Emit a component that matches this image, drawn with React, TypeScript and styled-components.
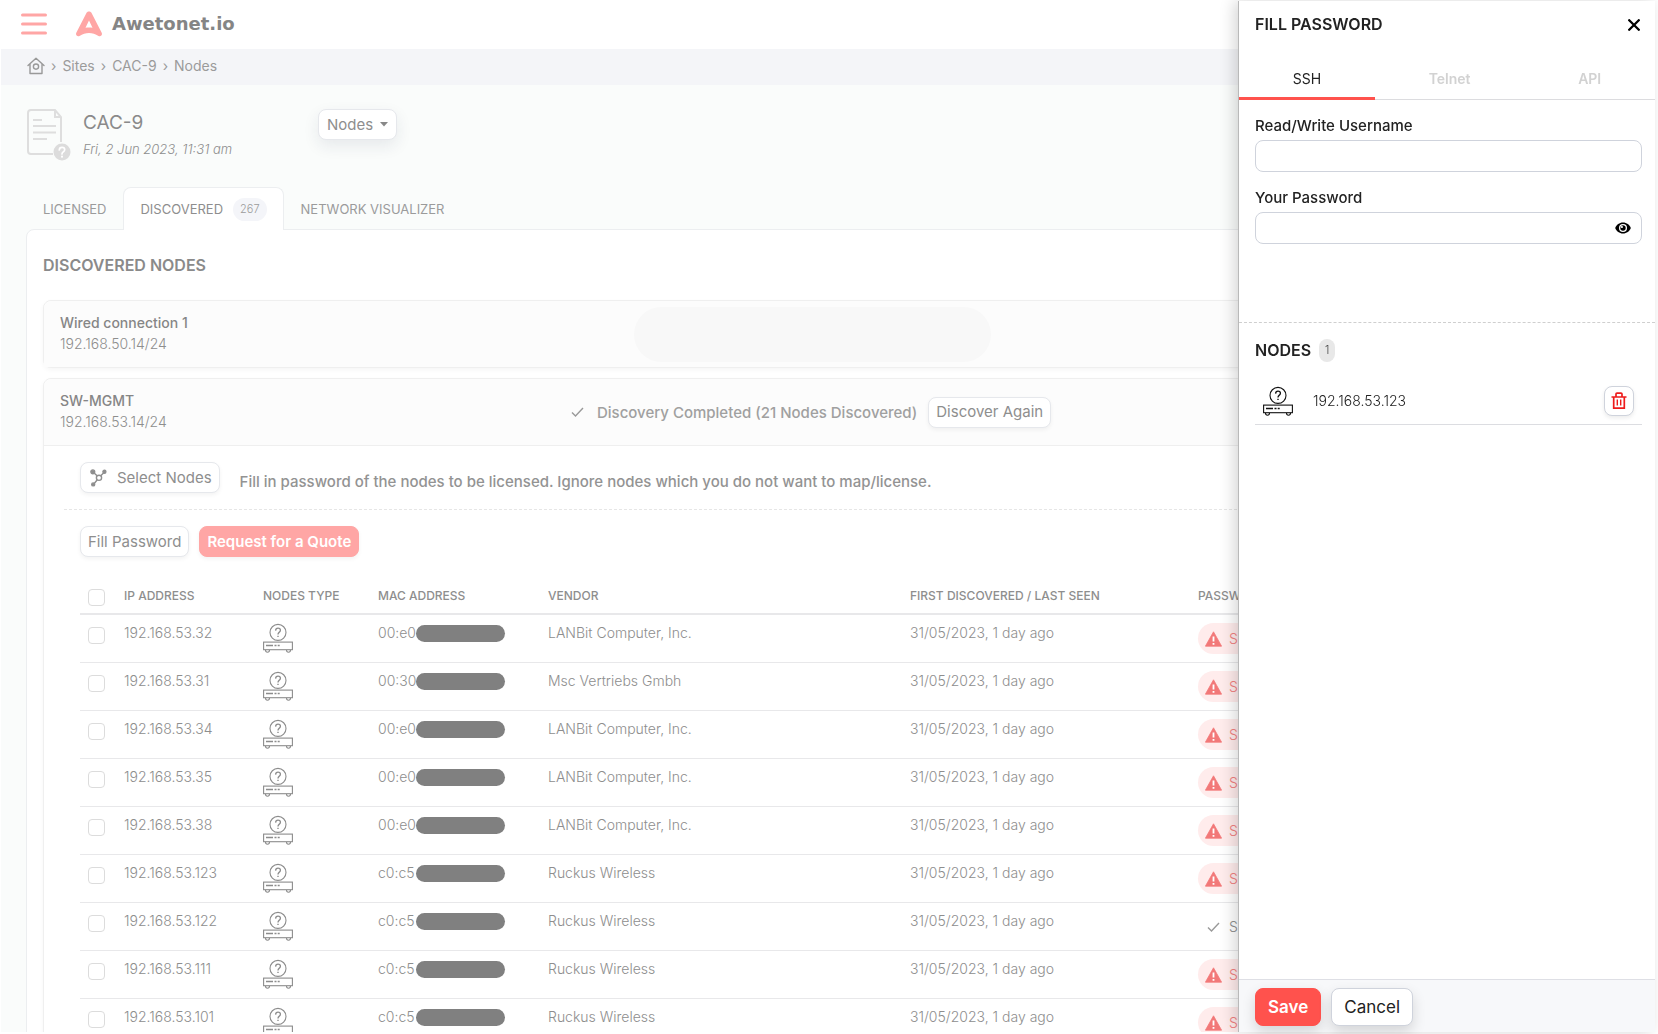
import React from "react";
import styled, { createGlobalStyle, css } from "styled-components";

const color = {
  accent: "#ff524d",
  accentSoft: "#ffa6a5",
  ink: "#222222",
  text: "#8e8e8e",
  light: "#9b9b9b",
  line: "#e8e8ea",
  field: "#cfd3dc",
};

const GlobalStyle = createGlobalStyle`
  * { box-sizing: border-box; }
  body {
    margin: 0;
    background: #fff;
    overflow: hidden;
    font-family: Inter, "Open Sans", sans-serif;
    font-size: 14px;
    line-height: 20px;
    color: ${color.text};
  }
  button, input, select { font: inherit; color: inherit; }
  button { cursor: pointer; }
  h1, h2, h3, p { margin: 0; }
`;

const Shell = styled.div`
  height: 100vh;
  padding: 1px 3px 2px 1px;
`;

const Page = styled.div`
  height: 100%;
  overflow: hidden;
  background: #fafcfb;
`;

const TopBar = styled.header`
  display: flex;
  align-items: center;
  height: 48px;
  padding: 0 20px 2px;
  gap: 29px;
  background: #fff;
`;

const IconButton = styled.button`
  display: flex;
  align-items: center;
  justify-content: center;
  padding: 0;
  border: 0;
  background: none;
`;

const Brand = styled.a`
  display: flex;
  align-items: center;
  gap: 10px;
  color: #858585;
  text-decoration: none;
  font-family: "DejaVu Sans", sans-serif;
  font-size: 18px;
  font-weight: 700;
`;

const Breadcrumb = styled.nav`
  display: flex;
  align-items: center;
  gap: 6px;
  height: 36px;
  padding: 0 26px 2px;
  background: #f4f5f8;
  color: ${color.light};

  a {
    display: flex;
    color: inherit;
    text-decoration: none;
  }
`;

const Content = styled.main`
  padding: 24px 25px 0;
`;

const SiteHead = styled.div`
  display: flex;
  align-items: flex-start;
  height: 78px;
  padding-left: 1px;
`;

const SiteInfo = styled.div`
  width: 246px;
  padding: 2px 0 0 11px;
`;

const SiteName = styled.h1`
  font-size: 19px;
  line-height: 24px;
  font-weight: 400;
  color: #8a8a8a;
`;

const SiteDate = styled.p`
  padding-top: 4px;
  font-size: 13px;
  line-height: 20px;
  font-weight: 300;
  font-style: italic;
`;

const buttonBox = css`
  display: inline-flex;
  align-items: center;
  height: 31px;
  border: 1px solid #e6e8ec;
  border-radius: 8px;
  background: #fff;
  font-size: 15px;
  white-space: nowrap;
`;

const NodeMenu = styled.label`
  ${buttonBox}
  padding: 0 8px;
  gap: 7px;
  box-shadow: 0 6px 16px rgba(30, 40, 80, 0.09);

  select {
    appearance: none;
    field-sizing: content;
    border: 0;
    padding: 0;
    background: none;
    outline: none;
  }
`;

const TabStrip = styled.div`
  display: flex;
  align-items: flex-end;
  height: 42px;
`;

const PageTab = styled.button<{ $active?: boolean }>`
  display: flex;
  align-items: center;
  gap: 10px;
  height: 42px;
  padding: 0 16px;
  border: 1px solid transparent;
  border-bottom: 0;
  border-radius: 8px 8px 0 0;
  background: none;
  color: ${color.light};
  font-size: 13px;

  ${(p) =>
    p.$active &&
    css`
      position: relative;
      height: 43px;
      margin-bottom: -1px;
      border-color: #eceef0;
      background: #fff;
      color: ${color.text};
    `}
`;

const Count = styled.span<{ $dark?: boolean }>`
  padding: 0 ${(p) => (p.$dark ? 6 : 7)}px;
  border-radius: 12px;
  background: ${(p) => (p.$dark ? "#e8e8e8" : "#f4f5f9")};
  color: ${(p) => (p.$dark ? "#444" : color.light)};
  font-size: 11px;
  font-weight: 300;
  line-height: 23px;
`;

const Panel = styled.section`
  padding: 23px 16px 0;
  border: 1px solid #eceef0;
  border-radius: 8px 8px 0 0;
  background: #fff;
`;

const PanelTitle = styled.h2`
  height: 47px;
  font-size: 16px;
  line-height: 24px;
  font-weight: 600;
  color: #8a8a8a;
`;

const Card = styled.article`
  margin-bottom: 10px;
  border: 1px solid #efefef;
  border-radius: 8px;
  background: #fff;
  box-shadow: 0 2px 5px rgba(0, 0, 0, 0.04);
`;

const CardHead = styled.div<{ $open?: boolean }>`
  display: grid;
  grid-template-columns: 509px auto 1fr;
  align-items: center;
  height: ${(p) => (p.$open ? 67 : 66)}px;
  padding-left: 16px;
  border-bottom: ${(p) => (p.$open ? "1px solid #efefef" : "0")};
  border-radius: 8px 8px 0 0;
  background: #fcfcfc;
`;

const NetName = styled.h3`
  font-size: 14px;
  line-height: 21px;
  font-weight: 500;
  color: #868686;
`;

const NetAddress = styled.p`
  padding-bottom: 2px;
  line-height: 21px;
  font-weight: 300;
`;

const Placeholder = styled.div`
  width: 357px;
  height: 55px;
  margin-left: 65px;
  border-radius: 28px;
  background: #f8f8f8;
`;

const Status = styled.div`
  display: flex;
  align-items: center;
  gap: 11px;
  font-size: 15px;
  font-weight: 500;
  color: #a0a0a0;

  p {
    padding-top: 2px;
  }
`;

const SmallButton = styled.button<{ $primary?: boolean }>`
  ${buttonBox}
  gap: 10px;
  padding: 0 7px;
  color: ${color.text};
  font-weight: 400;
  box-shadow: 0 2px 4px rgba(0, 0, 0, 0.05);

  ${(p) =>
    p.$primary &&
    css`
      border-color: ${color.accentSoft};
      background: ${color.accentSoft};
      color: #fff;
      font-weight: 600;
    `}
`;

const CardBody = styled.div`
  padding: 16px 20px 0;
`;

const HintRow = styled.div`
  display: flex;
  gap: 20px;
  height: 48px;
  padding-left: 16px;
  border-bottom: 1px dashed #e6e6e6;

  p {
    padding-top: 10px;
    font-size: 15px;
    font-weight: 500;
    color: #939393;
  }
`;

const Actions = styled.div`
  display: flex;
  gap: 10px;
  padding: 16px 16px 22px;
`;

const NodeTable = styled.table`
  width: calc(100% - 32px);
  margin-left: 16px;
  table-layout: fixed;
  border-collapse: separate;
  border-spacing: 0;
  text-align: left;

  th {
    height: 36px;
    padding: 0;
    border-bottom: 2px solid ${color.line};
    font-size: 12px;
    font-weight: 500;
  }
  td {
    height: 48px;
    padding: 8px 0 0;
    vertical-align: top;
    border-bottom: 1px solid ${color.line};
    font-weight: 300;
    white-space: nowrap;
  }
`;

const Tick = styled.input`
  appearance: none;
  display: block;
  width: 17px;
  height: 17px;
  margin: 4px 0 0 8px;
  border: 1px solid #dcdcdc;
  border-radius: 4px;
  background: #fff;

  th & {
    margin-top: 2px;
  }
`;

const Mac = styled.span`
  display: flex;
  align-items: center;
  width: 127px;
`;

const MacPrefix = styled.span`
  width: 38px;
`;

const Redacted = styled.span`
  width: 89px;
  height: 17px;
  border-radius: 9px;
  background: #808080;
`;

const PassState = styled.span<{ $ok?: boolean }>`
  display: inline-flex;
  align-items: center;
  vertical-align: top;
  gap: 7px;
  height: 31px;
  padding: 0 12px 0 7px;
  border-radius: 16px;
  background: ${(p) => (p.$ok ? "transparent" : "#ffecec")};
  color: ${(p) => (p.$ok ? color.text : "#f28080")};
`;

const Drawer = styled.aside`
  position: fixed;
  top: 1px;
  right: 3px;
  bottom: 2px;
  display: flex;
  flex-direction: column;
  width: 417px;
  border-left: 1px solid #b9b9b9;
  background: #fff;
  box-shadow: -4px 0 14px rgba(0, 0, 0, 0.16);
  color: ${color.ink};
`;

const DrawerHead = styled.div`
  display: flex;
  justify-content: space-between;
  height: 48px;
  padding: 11px 15px 12px 16px;
`;

const DrawerTitle = styled.h2`
  font-size: 16px;
  line-height: 24px;
  font-weight: 600;
`;

const DrawerTabs = styled.div`
  display: flex;
  height: 51px;
  border-bottom: 1px solid #dcdcdf;
`;

const DrawerTab = styled.button<{ $active?: boolean }>`
  flex: 1 1 auto;
  height: 51px;
  padding: 11px 0 0;
  border: 0;
  border-bottom: 3px solid ${(p) => (p.$active ? color.accent : "transparent")};
  background: none;
  color: ${(p) => (p.$active ? color.ink : "#d2d2d2")};
  font-weight: ${(p) => (p.$active ? 400 : 600)};
`;

const Form = styled.form`
  display: flex;
  flex-direction: column;
  gap: 16px;
  height: 223px;
  padding: 16px 13px 0 16px;
  border-bottom: 1px dashed #cfcfcf;
`;

const Field = styled.div`
  display: flex;
  flex-direction: column;
  gap: 4px;

  label {
    font-size: 15px;
    font-weight: 500;
  }
`;

const FieldBox = styled.div`
  display: flex;
  align-items: center;
  height: 32px;
  padding: 0 10px;
  border: 1px solid ${color.field};
  border-radius: 8px;

  input {
    flex: 1;
    min-width: 0;
    border: 0;
    padding: 0;
    outline: none;
    background: none;
  }
`;

const NodeSection = styled.section`
  flex: 1;
  padding: 15px 13px 0 16px;
`;

const NodeHeading = styled.div`
  display: flex;
  align-items: center;
  gap: 8px;
  height: 24px;
`;

const NodeRow = styled.div`
  display: flex;
  align-items: center;
  height: 63px;
  padding: 15px 8px 0;
  border-bottom: 1px solid #dcdde1;

  span {
    flex: 1;
    padding-left: 20px;
    font-weight: 300;
  }
`;

const DeleteButton = styled(IconButton)`
  width: 30px;
  height: 30px;
  border: 1px solid ${color.field};
  border-radius: 8px;
  background: #fff;
  box-shadow: 0 2px 4px rgba(0, 0, 0, 0.08);
`;

const DrawerFoot = styled.footer`
  display: flex;
  gap: 10px;
  height: 53px;
  padding: 8px 16px 0;
  border-top: 1px solid #dedfe5;
  background: #f7f8fa;
`;

const LargeButton = styled.button<{ $primary?: boolean }>`
  height: 38px;
  padding: 0 12px;
  border: 1px solid ${(p) => (p.$primary ? color.accent : color.field)};
  border-radius: 8px;
  background: ${(p) => (p.$primary ? color.accent : "#fff")};
  color: ${(p) => (p.$primary ? "#fff" : color.ink)};
  font-size: 17px;
  font-weight: ${(p) => (p.$primary ? 600 : 400)};
  box-shadow: 0 6px 14px rgba(0, 0, 0, 0.14);
`;

const Hamburger = () => (
  <svg width="26" height="22" viewBox="0 0 26 22" stroke={color.accentSoft} strokeWidth="3" strokeLinecap="round">
    <path d="M1.5 2H24.5M1.5 11H24.5M1.5 20H24.5" />
  </svg>
);

const Logo = () => (
  <svg width="26" height="26" viewBox="0 0 26 26" fill={color.accentSoft}>
    <path
      fillRule="evenodd"
      d="M10.7 1.6C11.6 0 14.4 0 15.3 1.6L25.7 21.8C26.7 24 24.6 26 22.5 24.9C16.5 20.9 9.5 20.9 3.5 24.9C1.4 26 -.7 24 .3 21.8ZM13 9.4L9.5 16.8C11.8 16.3 14.2 16.3 16.5 16.8Z"
    />
  </svg>
);

const HomeIcon = () => (
  <svg width="18" height="18" viewBox="0 0 18 18" fill="none" stroke="#999" strokeWidth="1.4" strokeLinejoin="round" strokeLinecap="round">
    <path d="M1 8.5L9 1.2L17 8.5M3 7V16.5H15V7" />
    <circle cx="9" cy="9.6" r="2.6" />
  </svg>
);

const SiteIcon = () => (
  <svg width="45" height="52" viewBox="0 0 45 52" fill="none">
    <path d="M28 1H4Q1 1 1 4V42Q1 45 4 45H26M34 33V8L28 1V8H34" stroke="#dedede" strokeWidth="2" />
    <path d="M6 11H15M6 17H29M6 23.5H29M6 30H20" stroke="#dedede" strokeWidth="2" />
    <circle cx="35" cy="43" r="8.5" fill="#dcdcdc" />
    <path d="M32.3 41Q32.4 38.4 35 38.4Q37.7 38.4 37.7 40.7Q37.7 42 36.2 42.9Q35 43.7 35 45" stroke="#fff" strokeWidth="1.7" strokeLinecap="round" />
    <circle cx="35" cy="47.7" r="1.1" fill="#fff" />
  </svg>
);

const Caret = () => (
  <svg width="8" height="5" viewBox="0 0 8 5" fill="#888">
    <path d="M0 0H8L4 4.5Z" />
  </svg>
);

const CheckIcon = () => (
  <svg width="17" height="14" viewBox="0 0 17 14" fill="none" stroke="#999" strokeWidth="1.4">
    <path d="M3 7.5L6.5 11L14 3" />
  </svg>
);

const WarnIcon = () => (
  <svg width="17" height="16" viewBox="0 0 17 16">
    <path d="M8.5 .8L16.6 15.2H.4Z" fill="#f27878" stroke="#f27878" strokeWidth=".8" strokeLinejoin="round" />
    <path d="M8.5 5.5V10.5M8.5 12V13.7" stroke="#fff" strokeWidth="1.8" />
  </svg>
);

const GraphIcon = () => (
  <svg width="19" height="18" viewBox="-2 0 19 18" fill="#8e8e8e" stroke="#8e8e8e" strokeWidth="1.4">
    <path d="M3 3L9 8.5L14.5 3M9 8.5L3.5 15.5" fill="none" />
    <circle cx="2.8" cy="2.8" r="1.9" />
    <circle cx="14.4" cy="2.8" r="1.5" />
    <circle cx="3.2" cy="15.4" r="1.5" />
    <circle cx="9" cy="8.8" r="2.6" fill="#fff" />
  </svg>
);

const NodeIcon = ({ stroke = "#8c8c8c" }: { stroke?: string }) => (
  <svg width="30" height="30" viewBox="0 0 30 30" fill="none" stroke={stroke} strokeWidth="1.1" display="block">
    <circle cx="15" cy="9.4" r="8" />
    <path d="M12.6 7.6Q12.7 5.2 15 5.2Q17.4 5.2 17.4 7.3Q17.4 8.6 16.1 9.4Q15 10.2 15 11.4" strokeWidth="1.3" />
    <path d="M15 12.7V14.1" strokeWidth="1.4" />
    <rect x=".6" y="19.1" width="28.8" height="7.6" />
    <path d="M3 22.5H10M11.5 22.5H13.5M14.7 22.5H16.7" strokeWidth="1.7" />
    <path d="M2.5 27Q2.5 29.2 4.5 29.2Q6.5 29.2 6.5 27M23.5 27Q23.5 29.2 25.5 29.2Q27.5 29.2 27.5 27" />
  </svg>
);

const CloseIcon = () => (
  <svg width="12" height="12" viewBox="0 0 12 12" stroke="#000" strokeWidth="2.3" strokeLinecap="round">
    <path d="M1.2 1.2L10.8 10.8M10.8 1.2L1.2 10.8" />
  </svg>
);

const EyeIcon = () => (
  <svg width="16" height="12" viewBox="0 0 16 12">
    <path d="M8 .5C4.3 .5 1.5 2.8 .2 6C1.5 9.2 4.3 11.5 8 11.5S14.5 9.2 15.8 6C14.5 2.8 11.7 .5 8 .5Z" fill="#000" />
    <circle cx="8" cy="6" r="4" fill="#fff" />
    <circle cx="8" cy="6" r="2.7" fill="#000" />
    <circle cx="6.9" cy="5" r="1.1" fill="#fff" />
  </svg>
);

const TrashIcon = () => (
  <svg width="16" height="18" viewBox="0 0 16 18" fill="none" stroke="#ee1c1c" strokeWidth="1.7">
    <path d="M.5 5H15.5M5 5V2Q5 1.2 6 1.2H10Q11 1.2 11 2V5M2.7 5V16.2H13.3V5" />
    <path d="M6.3 7.5V13.5M9.7 7.5V13.5" strokeWidth="1.4" />
  </svg>
);

const nodes = [
  { ip: "192.168.53.32", mac: "00:e0", vendor: "LANBit Computer, Inc." },
  { ip: "192.168.53.31", mac: "00:30", vendor: "Msc Vertriebs Gmbh" },
  { ip: "192.168.53.34", mac: "00:e0", vendor: "LANBit Computer, Inc." },
  { ip: "192.168.53.35", mac: "00:e0", vendor: "LANBit Computer, Inc." },
  { ip: "192.168.53.38", mac: "00:e0", vendor: "LANBit Computer, Inc." },
  { ip: "192.168.53.123", mac: "c0:c5", vendor: "Ruckus Wireless" },
  { ip: "192.168.53.122", mac: "c0:c5", vendor: "Ruckus Wireless", ok: true },
  { ip: "192.168.53.111", mac: "c0:c5", vendor: "Ruckus Wireless" },
  { ip: "192.168.53.101", mac: "c0:c5", vendor: "Ruckus Wireless" },
];

const columnWidths = [44, 139, 115, 170, 362, 288];

function DiscoveredTable() {
  return (
    <NodeTable>
      <colgroup>
        {columnWidths.map((w) => (
          <col key={w} width={w} />
        ))}
        <col />
      </colgroup>
      <thead>
        <tr>
          <th><Tick type="checkbox" aria-label="Select all nodes" /></th>
          <th>IP ADDRESS</th>
          <th>NODES TYPE</th>
          <th>MAC ADDRESS</th>
          <th>VENDOR</th>
          <th>FIRST DISCOVERED / LAST SEEN</th>
          <th>PASSWORD</th>
        </tr>
      </thead>
      <tbody>
        {nodes.map((n) => (
          <tr key={n.ip}>
            <td><Tick type="checkbox" aria-label={`Select ${n.ip}`} /></td>
            <td>{n.ip}</td>
            <td><NodeIcon /></td>
            <td>
              <Mac>
                <MacPrefix>{n.mac}</MacPrefix>
                <Redacted />
              </Mac>
            </td>
            <td>{n.vendor}</td>
            <td>31/05/2023, 1 day ago</td>
            <td>
              <PassState $ok={n.ok}>
                {n.ok ? <CheckIcon /> : <WarnIcon />}
                SSH
              </PassState>
            </td>
          </tr>
        ))}
      </tbody>
    </NodeTable>
  );
}

function PasswordDrawer() {
  return (
    <Drawer>
      <DrawerHead>
        <DrawerTitle>FILL PASSWORD</DrawerTitle>
        <IconButton aria-label="Close"><CloseIcon /></IconButton>
      </DrawerHead>
      <DrawerTabs>
        <DrawerTab $active>SSH</DrawerTab>
        <DrawerTab>Telnet</DrawerTab>
        <DrawerTab>API</DrawerTab>
      </DrawerTabs>
      <Form>
        <Field>
          <label htmlFor="username">Read/Write Username</label>
          <FieldBox><input id="username" type="text" /></FieldBox>
        </Field>
        <Field>
          <label htmlFor="password">Your Password</label>
          <FieldBox>
            <input id="password" type="password" />
            <IconButton type="button" aria-label="Show password"><EyeIcon /></IconButton>
          </FieldBox>
        </Field>
      </Form>
      <NodeSection>
        <NodeHeading>
          <DrawerTitle>NODES</DrawerTitle>
          <Count $dark>1</Count>
        </NodeHeading>
        <NodeRow>
          <NodeIcon stroke="#111" />
          <span>192.168.53.123</span>
          <DeleteButton aria-label="Remove 192.168.53.123"><TrashIcon /></DeleteButton>
        </NodeRow>
      </NodeSection>
      <DrawerFoot>
        <LargeButton $primary>Save</LargeButton>
        <LargeButton>Cancel</LargeButton>
      </DrawerFoot>
    </Drawer>
  );
}

export default function App() {
  return (
    <Shell>
      <GlobalStyle />
      <Page>
        <TopBar>
          <IconButton aria-label="Menu"><Hamburger /></IconButton>
          <Brand href="#"><Logo />Awetonet.io</Brand>
        </TopBar>
        <Breadcrumb>
          <a href="#" aria-label="Home"><HomeIcon /></a>
          <span>›</span>
          <a href="#">Sites</a>
          <span>›</span>
          <a href="#">CAC-9</a>
          <span>›</span>
          <a href="#">Nodes</a>
        </Breadcrumb>
        <Content>
          <SiteHead>
            <SiteIcon />
            <SiteInfo>
              <SiteName>CAC-9</SiteName>
              <SiteDate>Fri, 2 Jun 2023, 11:31 am</SiteDate>
            </SiteInfo>
            <NodeMenu>
              <select aria-label="View"><option>Nodes</option></select>
              <Caret />
            </NodeMenu>
          </SiteHead>
          <TabStrip>
            <PageTab>LICENSED</PageTab>
            <PageTab $active>DISCOVERED <Count>267</Count></PageTab>
            <PageTab>NETWORK VISUALIZER</PageTab>
          </TabStrip>
          <Panel>
            <PanelTitle>DISCOVERED NODES</PanelTitle>
            <Card>
              <CardHead>
                <div>
                  <NetName>Wired connection 1</NetName>
                  <NetAddress>192.168.50.14/24</NetAddress>
                </div>
                <Placeholder />
              </CardHead>
            </Card>
            <Card>
              <CardHead $open>
                <div>
                  <NetName>SW-MGMT</NetName>
                  <NetAddress>192.168.53.14/24</NetAddress>
                </div>
                <Status>
                  <CheckIcon />
                  <p>Discovery Completed (21 Nodes Discovered)</p>
                  <SmallButton>Discover Again</SmallButton>
                </Status>
              </CardHead>
              <CardBody>
                <HintRow>
                  <SmallButton><GraphIcon />Select Nodes</SmallButton>
                  <p>Fill in password of the nodes to be licensed. Ignore nodes which you do not want to map/license.</p>
                </HintRow>
                <Actions>
                  <SmallButton>Fill Password</SmallButton>
                  <SmallButton $primary>Request for a Quote</SmallButton>
                </Actions>
                <DiscoveredTable />
              </CardBody>
            </Card>
          </Panel>
        </Content>
      </Page>
      <PasswordDrawer />
    </Shell>
  );
}
